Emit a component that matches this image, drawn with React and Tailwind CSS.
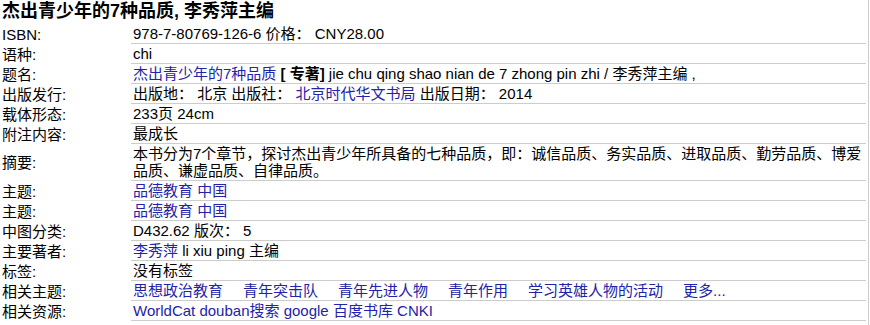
const A = ({ children }) => <a className="text-[#2323aa]">{children}</a>;

const rows = [
  ["ISBN:", <>978-7-80769-126-6 价格： CNY28.00</>],
  ["语种:", <>chi</>],
  [
    "题名:",
    <>
      <A>杰出青少年的7种品质</A> <b>[ 专著]</b> jie chu qing shao nian de 7 zhong pin zhi / 李秀萍主编 ,
    </>,
  ],
  [
    "出版发行:",
    <>
      出版地： 北京 出版社： <A>北京时代华文书局</A> 出版日期： 2014
    </>,
  ],
  ["载体形态:", <>233页 24cm</>],
  ["附注内容:", <>最成长</>],
  [
    "摘要:",
    <>
      本书分为7个章节，探讨杰出青少年所具备的七种品质，即：诚信品质、务实品质、进取品质、勤劳品质、博爱品质、谦虚品质、自律品质。
    </>,
  ],
  ["主题:", <A>品德教育 中国</A>],
  ["主题:", <A>品德教育 中国</A>],
  ["中图分类:", <>D432.62 版次： 5</>],
  [
    "主要著者:",
    <>
      <A>李秀萍</A> li xiu ping 主编
    </>,
  ],
  ["标签:", <>没有标签</>],
  [
    "相关主题:",
    <>
      {["思想政治教育", "青年突击队", "青年先进人物", "青年作用", "学习英雄人物的活动", "更多..."].map((t) => (
        <span key={t} className="mr-5 text-[#2323aa]">
          {t}
        </span>
      ))}
    </>,
  ],
  [
    "相关资源:",
    <>
      <A>WorldCat</A> <A>douban搜索</A> <A>google</A> <A>百度书库</A> <A>CNKI</A>
    </>,
  ],
];

export default function App() {
  return (
    <div
      className="w-[869px] h-[325px] bg-white border-r border-[#cccccc] text-black"
      style={{ fontFamily: '"Liberation Sans", "Noto Sans CJK SC", sans-serif' }}
    >
      <h1 className="pl-[2px] pt-px h-[24px] text-[18px] leading-[21px] font-bold">
        杰出青少年的7种品质, 李秀萍主编
      </h1>
      <div className="flex flex-col">
        {rows.map(([label, value], i) => (
          <div key={i} className="flex text-[15px] leading-[17px]">
            <div className="w-[131px] shrink-0 pl-[2px] py-px flex items-center">{label}</div>
            <div className="w-[735px] pl-[2px] py-px border-b border-[#cccccc]">{value}</div>
          </div>
        ))}
      </div>
    </div>
  );
}
